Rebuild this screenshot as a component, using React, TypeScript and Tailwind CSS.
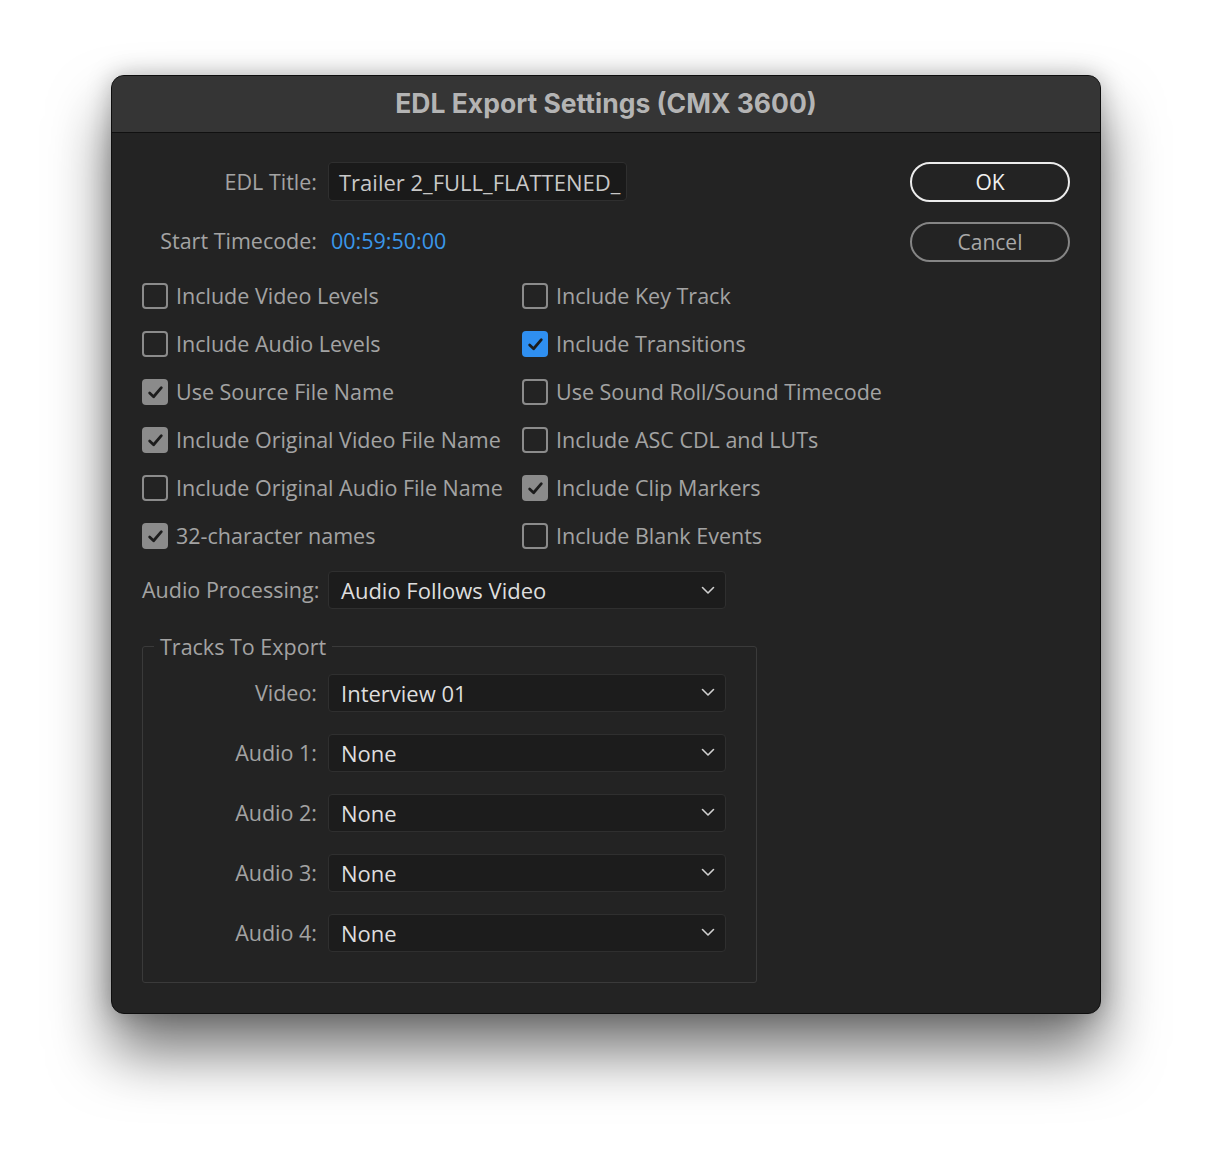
import React from "react";

const FONT = { fontFamily: '"Open Sans", "Noto Sans", sans-serif' };

interface CheckProps {
  label: string;
  state: "off" | "on" | "blue";
}

function CheckItem({ label, state }: CheckProps) {
  const box =
    state === "off"
      ? "border-2 border-[#8b8b8b] bg-transparent"
      : state === "blue"
        ? "bg-[#2f8ff0]"
        : "bg-[#8b8b8b]";
  return (
    <div className="flex h-[48px] items-center gap-[8px]">
      <div className={`flex h-[26px] w-[26px] shrink-0 items-center justify-center rounded-[4px] ${box}`}>
        {state !== "off" && (
          <svg width="17" height="17" viewBox="0 0 16 16" fill="none" aria-hidden="true">
            <polyline points="2.5 8.5 6.2 12 13.5 3.5" stroke="#1c1c1c" strokeWidth="2.6" strokeLinecap="round" strokeLinejoin="round" />
          </svg>
        )}
      </div>
      <span className="whitespace-nowrap text-[21.5px] leading-none text-[#a3a3a3]">{label}</span>
    </div>
  );
}

function Chevron() {
  return (
    <svg width="14" height="9" viewBox="0 0 14 9" fill="none" aria-hidden="true">
      <polyline points="1.5 1.5 7 7 12.5 1.5" stroke="#cfcfcf" strokeWidth="1.6" strokeLinecap="round" strokeLinejoin="round" />
    </svg>
  );
}

function SelectBox({ value }: { value: string }) {
  return (
    <div className="flex h-[38px] w-[398px] items-center justify-between rounded-[4px] border border-[#2f2f2f] bg-[#1c1c1c] pl-[12px] pr-[10px]">
      <span className="text-[22px] leading-none text-[#dedede]">{value}</span>
      <Chevron />
    </div>
  );
}

function Row({ label, labelWidth, children }: { label: string; labelWidth: string; children: React.ReactNode }) {
  return (
    <div className="flex items-center gap-[11px]">
      <span className={`${labelWidth} whitespace-nowrap text-right text-[21.5px] leading-none text-[#a3a3a3]`}>
        {label}
      </span>
      {children}
    </div>
  );
}

const left: CheckProps[] = [
  { label: "Include Video Levels", state: "off" },
  { label: "Include Audio Levels", state: "off" },
  { label: "Use Source File Name", state: "on" },
  { label: "Include Original Video File Name", state: "on" },
  { label: "Include Original Audio File Name", state: "off" },
  { label: "32-character names", state: "on" },
];

const right: CheckProps[] = [
  { label: "Include Key Track", state: "off" },
  { label: "Include Transitions", state: "blue" },
  { label: "Use Sound Roll/Sound Timecode", state: "off" },
  { label: "Include ASC CDL and LUTs", state: "off" },
  { label: "Include Clip Markers", state: "on" },
  { label: "Include Blank Events", state: "off" },
];

const tracks = [
  { label: "Video:", value: "Interview 01" },
  { label: "Audio 1:", value: "None" },
  { label: "Audio 2:", value: "None" },
  { label: "Audio 3:", value: "None" },
  { label: "Audio 4:", value: "None" },
];

export default function App() {
  return (
    <div className="flex min-h-[1162px] justify-center bg-white pt-[75px]" style={FONT}>
      <div className="h-[939px] w-[990px] overflow-hidden rounded-[13px] border border-[#0e0e0e] bg-[#232323] shadow-[0_38px_60px_rgba(0,0,0,0.55),0_0_24px_rgba(0,0,0,0.25)]">
        {/* barre de titre */}
        <div className="flex h-[57px] items-center justify-center border-b border-[#101010] bg-[#353535]">
          <span
            className="text-[26.5px] font-bold text-[#b4b4b4]"
            style={{ fontFamily: '"Inter", "Liberation Sans", sans-serif' }}
          >
            EDL Export Settings (CMX 3600)
          </span>
        </div>

        <div className="flex justify-between pl-[30px] pr-[30px] pt-[29px]">
          <div className="flex flex-col">
            <Row label="EDL Title:" labelWidth="w-[175px]">
              <div className="flex h-[39px] w-[299px] items-center overflow-hidden rounded-[4px] border border-[#2f2f2f] bg-[#1a1a1a] pl-[10px]">
                <span className="whitespace-nowrap text-[22px] leading-none text-[#c8c8c8]">
                  Trailer 2_FULL_FLATTENED_
                </span>
              </div>
            </Row>
            <div className="mt-[21px] flex h-[38px] items-center">
              <Row label="Start Timecode:" labelWidth="w-[175px]">
                <span className="pl-[3px] text-[21.5px] leading-none text-[#3a97ea]">00:59:50:00</span>
              </Row>
            </div>

            {/* cases a cocher */}
            <div className="mt-[12px] flex">
              <div className="flex w-[380px] flex-col">
                {left.map((c) => (
                  <CheckItem key={c.label} {...c} />
                ))}
              </div>
              <div className="flex flex-col">
                {right.map((c) => (
                  <CheckItem key={c.label} {...c} />
                ))}
              </div>
            </div>

            <div className="mt-[11px]">
              <Row label="Audio Processing:" labelWidth="w-[175px]">
                <SelectBox value="Audio Follows Video" />
              </Row>
            </div>

            {/* Tracks To Export */}
            <fieldset className="mt-[27px] w-[615px] rounded-[3px] border border-[#3a3a3a] pb-[30px] pl-0 pr-0 pt-[16px]">
              <legend className="ml-[11px] px-[6px] text-[21.5px] leading-none text-[#a3a3a3]">
                Tracks To Export
              </legend>
              <div className="flex flex-col gap-[22px]">
                {tracks.map((t) => (
                  <Row key={t.label} label={t.label} labelWidth="w-[174px]">
                    <SelectBox value={t.value} />
                  </Row>
                ))}
              </div>
            </fieldset>
          </div>

          <div className="flex flex-col gap-[20px]">
            <button className="flex h-[40px] w-[160px] items-center justify-center rounded-full border-2 border-[#ececec] text-[21px] leading-none text-[#f0f0f0]">
              OK
            </button>
            <button className="flex h-[40px] w-[160px] items-center justify-center rounded-full border-2 border-[#858585] text-[21px] leading-none text-[#a8a8a8]">
              Cancel
            </button>
          </div>
        </div>
      </div>
    </div>
  );
}
